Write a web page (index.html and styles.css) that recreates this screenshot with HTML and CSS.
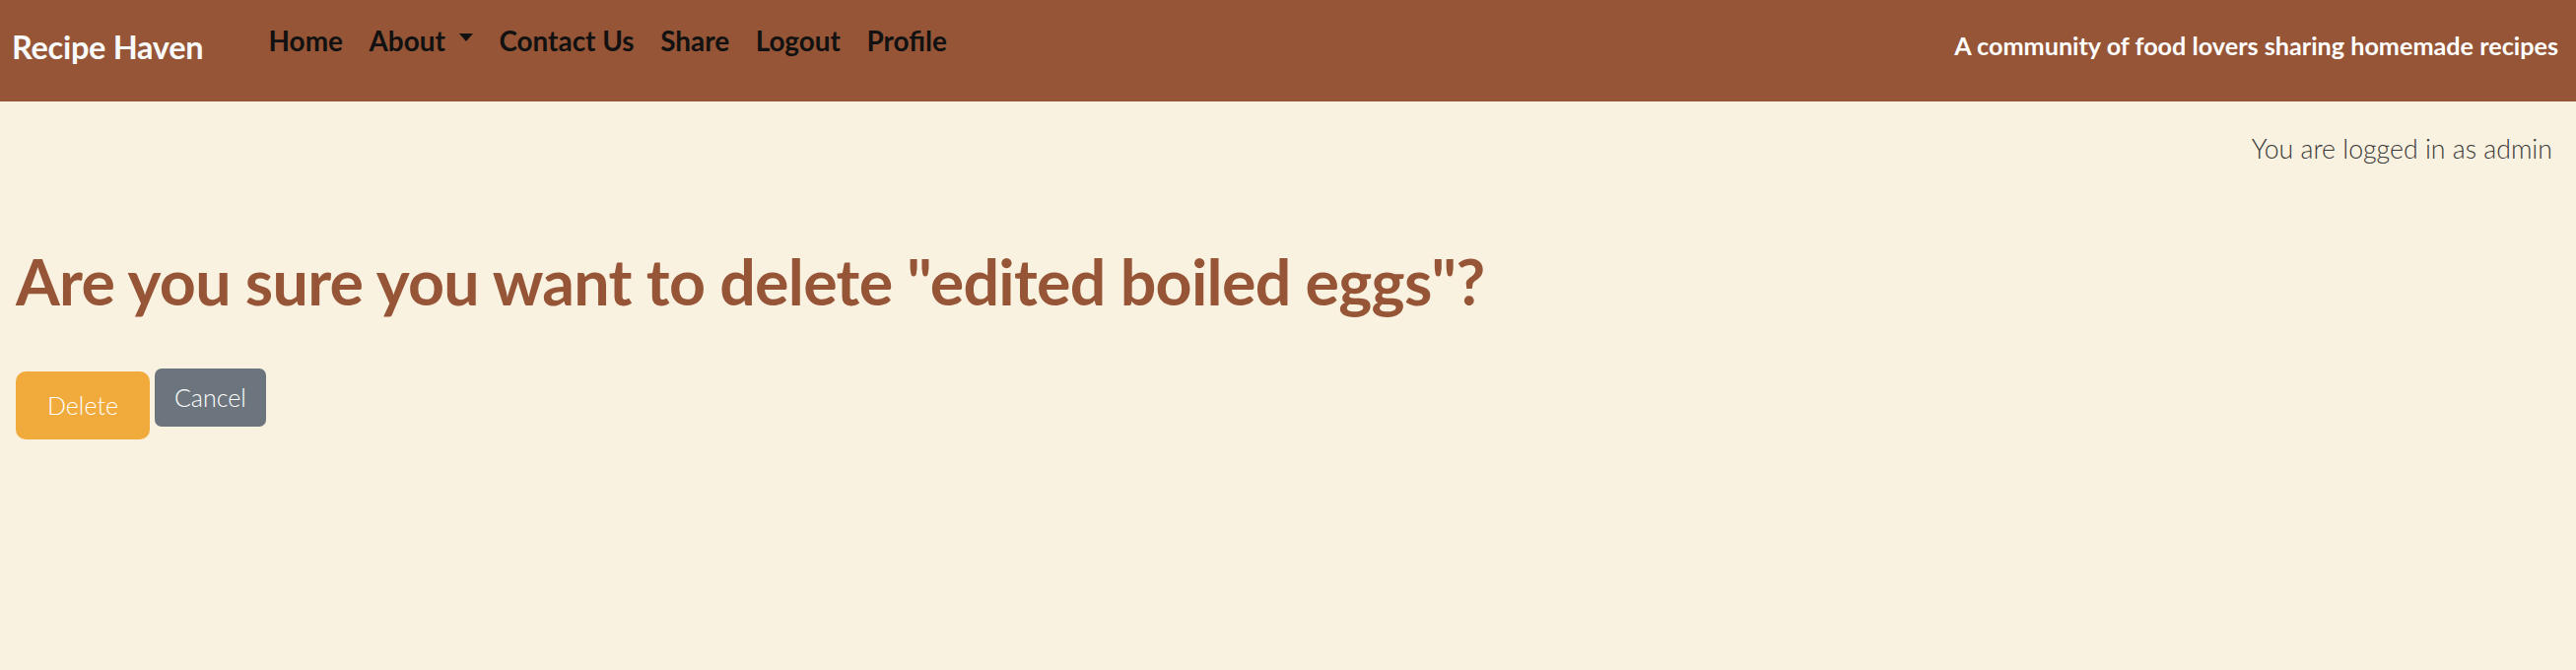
FILE: index.html
```html
<!DOCTYPE html>
<html lang="en">
<head>
<meta charset="utf-8">
<title>Recipe Haven</title>
<link rel="stylesheet" href="styles.css">
</head>
<body>
<header class="navbar">
  <a class="brand" href="#">Recipe Haven</a>
  <nav class="nav-links">
    <a class="nav-link" href="#">Home</a>
    <a class="nav-link dropdown" href="#">About<span class="caret"></span></a>
    <a class="nav-link" href="#">Contact Us</a>
    <a class="nav-link" href="#">Share</a>
    <a class="nav-link" href="#">Logout</a>
    <a class="nav-link" href="#">Profile</a>
  </nav>
  <span class="tagline">A community of food lovers sharing homemade recipes</span>
</header>
<main class="content">
  <p class="login-status">You are logged in as admin</p>
  <h1 class="title">Are you sure you want to delete "edited boiled eggs"?</h1>
  <div class="actions">
    <form class="delete-form"><button type="button" class="btn btn-delete">Delete</button></form>
    <a class="btn btn-cancel" href="#">Cancel</a>
  </div>
</main>
</body>
</html>
```
FILE: styles.css
```css
* { box-sizing: border-box; }
html, body { margin: 0; padding: 0; }
body {
  background: #faf2e0;
  font-family: Lato, "Noto Sans", sans-serif;
  width: 2614px;
  height: 680px;
  overflow: hidden;
}
.navbar {
  background: #965536;
  height: 103px;
  display: flex;
  align-items: flex-start;
  padding: 0 18px 0 12px;
}
.brand {
  color: #f8f9fa;
  font-weight: 700;
  font-size: 32.5px;
  letter-spacing: -0.3px;
  line-height: 1.2;
  margin-top: 28px;
  text-decoration: none;
}
.nav-links {
  display: flex;
  margin-left: 53px;
  margin-top: 25px;
}
.nav-link {
  color: #111;
  font-weight: 700;
  font-size: 27.9px;
  line-height: 1.2;
  padding: 0 13.3px;
  text-decoration: none;
  display: flex;
  align-items: center;
}
.caret {
  display: inline-block;
  width: 0;
  height: 0;
  margin-left: 14px;
  margin-bottom: 8px;
  border-left: 7px solid transparent;
  border-right: 7px solid transparent;
  border-top: 8px solid #111;
}
.tagline {
  margin-left: auto;
  color: #fff;
  font-weight: 700;
  font-size: 25.2px;
  line-height: 1.2;
  margin-top: 31px;
}
.content {
  padding: 0 16px;
}
.login-status {
  margin: 32px 8px 0 0;
  text-align: right;
  font-weight: 300;
  font-size: 26.7px;
  line-height: 1.2;
  color: #3a3a3a;
}
.title {
  margin: 80px 0 0 0;
  color: #965536;
  font-weight: 700;
  font-size: 64.5px;
  letter-spacing: -0.7px;
  line-height: 1.2;
}
.actions {
  display: flex;
  align-items: flex-start;
  gap: 5px;
  margin-top: 50px;
}
.delete-form { margin: 3px 0 0 0; }
.btn {
  display: inline-block;
  font-family: Lato, "Noto Sans", sans-serif;
  font-weight: 300;
  font-size: 25px;
  line-height: 41px;
  color: #fff;
  border: none;
  text-decoration: none;
}
.btn-delete {
  background: #f1aa3c;
  padding: 14px 32px;
  border-radius: 10px;
}
.btn-cancel {
  background: #6c757d;
  padding: 9px 20px;
  border-radius: 7px;
}
```
